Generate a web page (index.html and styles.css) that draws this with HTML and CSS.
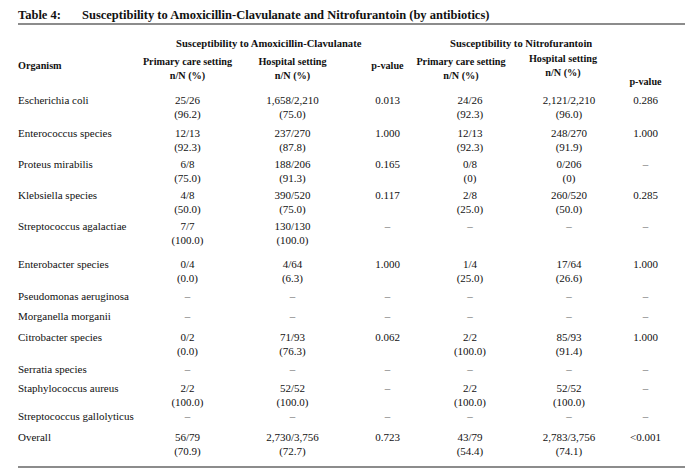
FILE: index.html
```html
<!DOCTYPE html>
<html>
<head>
<meta charset="utf-8">
<link rel="stylesheet" href="styles.css">
</head>
<body>
<div class="page">
  <h1 class="title"><span class="label">Table 4:</span><span>Susceptibility to Amoxicillin-Clavulanate and Nitrofurantoin (by antibiotics)</span></h1>
  <table class="data">
    <colgroup>
      <col class="c-org"><col class="c-pc"><col class="c-hs"><col class="c-pv"><col class="c-npc"><col class="c-nhs"><col class="c-npv"><col class="c-end">
    </colgroup>
    <thead>
      <tr class="group">
        <th></th>
        <th colspan="3" class="grp grp-a">Susceptibility to Amoxicillin-Clavulanate</th>
        <th colspan="3" class="grp grp-n">Susceptibility to Nitrofurantoin</th>
        <th></th>
      </tr>
      <tr class="cols">
        <th class="org h-org">Organism</th>
        <th class="h-two">Primary care setting<br>n/N (%)</th>
        <th class="h-two">Hospital setting<br>n/N (%)</th>
        <th class="h-pv">p-value</th>
        <th class="h-two"><div class="h-wide">Primary care setting<br>n/N (%)</div></th>
        <th class="h-two h-up">Hospital setting<br>n/N (%)</th>
        <th class="h-low">p-value</th>
        <th></th>
      </tr>
    </thead>
    <tbody>
      <tr class="r-esch"><td class="org">Escherichia coli</td><td>25/26<br>(96.2)</td><td>1,658/2,210<br>(75.0)</td><td>0.013</td><td>24/26<br>(92.3)</td><td>2,121/2,210<br>(96.0)</td><td>0.286</td><td></td></tr>
      <tr class="r2"><td class="org">Enterococcus species</td><td>12/13<br>(92.3)</td><td>237/270<br>(87.8)</td><td>1.000</td><td>12/13<br>(92.3)</td><td>248/270<br>(91.9)</td><td>1.000</td><td></td></tr>
      <tr class="r2"><td class="org">Proteus mirabilis</td><td>6/8<br>(75.0)</td><td>188/206<br>(91.3)</td><td>0.165</td><td>0/8<br>(0)</td><td>0/206<br>(0)</td><td class="dash">–</td><td></td></tr>
      <tr class="r2"><td class="org">Klebsiella species</td><td>4/8<br>(50.0)</td><td>390/520<br>(75.0)</td><td>0.117</td><td>2/8<br>(25.0)</td><td>260/520<br>(50.0)</td><td>0.285</td><td></td></tr>
      <tr class="r-gap"><td class="org">Streptococcus agalactiae</td><td>7/7<br>(100.0)</td><td>130/130<br>(100.0)</td><td class="dash">–</td><td class="dash">–</td><td class="dash">–</td><td class="dash">–</td><td></td></tr>
      <tr class="r2b"><td class="org">Enterobacter species</td><td>0/4<br>(0.0)</td><td>4/64<br>(6.3)</td><td>1.000</td><td>1/4<br>(25.0)</td><td>17/64<br>(26.6)</td><td>1.000</td><td></td></tr>
      <tr class="r1a"><td class="org">Pseudomonas aeruginosa</td><td class="dash">–</td><td class="dash">–</td><td class="dash">–</td><td class="dash">–</td><td class="dash">–</td><td class="dash">–</td><td></td></tr>
      <tr class="r1"><td class="org">Morganella morganii</td><td class="dash">–</td><td class="dash">–</td><td class="dash">–</td><td class="dash">–</td><td class="dash">–</td><td class="dash">–</td><td></td></tr>
      <tr class="r2b"><td class="org">Citrobacter species</td><td>0/2<br>(0.0)</td><td>71/93<br>(76.3)</td><td>0.062</td><td>2/2<br>(100.0)</td><td>85/93<br>(91.4)</td><td>1.000</td><td></td></tr>
      <tr class="r1b"><td class="org">Serratia species</td><td class="dash">–</td><td class="dash">–</td><td class="dash">–</td><td class="dash">–</td><td class="dash">–</td><td class="dash">–</td><td></td></tr>
      <tr class="r-staph"><td class="org">Staphylococcus aureus</td><td>2/2<br>(100.0)</td><td>52/52<br>(100.0)</td><td class="dash">–</td><td>2/2<br>(100.0)</td><td>52/52<br>(100.0)</td><td class="dash">–</td><td></td></tr>
      <tr class="r1"><td class="org">Streptococcus gallolyticus</td><td class="dash">–</td><td class="dash">–</td><td class="dash">–</td><td class="dash">–</td><td class="dash">–</td><td class="dash">–</td><td></td></tr>
      <tr class="r-last"><td class="org">Overall</td><td>56/79<br>(70.9)</td><td>2,730/3,756<br>(72.7)</td><td>0.723</td><td>43/79<br>(54.4)</td><td>2,783/3,756<br>(74.1)</td><td>&lt;0.001</td><td></td></tr>
    </tbody>
  </table>
</div>
</body>
</html>
```

FILE: styles.css
```css
html, body {
  margin: 0;
  padding: 0;
  background: #ffffff;
}

.page {
  width: 667px;
  padding-left: 18px;
  font-family: "Liberation Serif", "Times New Roman", serif;
  color: #111;
}

.title {
  margin: 0;
  padding-top: 8px;
  font-size: 12.5px;
  line-height: 15px;
  font-weight: bold;
  border-bottom: 2px solid #8c8c8c;
  display: flex;
}

.title .label {
  width: 64px;
  flex: none;
}

.data {
  width: 667px;
  border-collapse: collapse;
  table-layout: fixed;
  font-size: 11px;
  line-height: 14px;
  border-bottom: 2px solid #8c8c8c;
}

.c-org { width: 117px; }
.c-pc { width: 105px; }
.c-hs { width: 105px; }
.c-pv { width: 85px; }
.c-npc { width: 80px; }
.c-nhs { width: 118px; }
.c-npv { width: 35px; }
.c-end { width: 22px; }

.data th, .data td {
  padding: 0;
  text-align: center;
  vertical-align: top;
  white-space: nowrap;
}

.data th {
  font-weight: bold;
}

.data .org {
  text-align: left;
}

.group th {
  padding-top: 12px;
  height: 14px;
  font-size: 10.6px;
}

.data .grp {
  text-align: left;
}

.data .grp-a {
  padding-left: 41px;
}

.data .grp-n {
  padding-left: 20px;
}

.cols th {
  font-size: 10.2px;
  padding-top: 4px;
}

.cols .h-org,
.cols .h-pv {
  padding-top: 8px;
}

.h-wide {
  margin-left: -16px;
  margin-right: 2px;
  text-align: center;
}

.cols .h-up {
  padding-top: 1px;
  padding-right: 12px;
}

.cols .h-low {
  padding-top: 24px;
  padding-bottom: 4px;
}

.r-esch td { padding-bottom: 5px; }
.r2 td { padding-bottom: 3px; }
.r-gap td { padding-bottom: 10px; }
.r2b td { padding-bottom: 4px; }
.r1a td { padding-bottom: 6px; }
.r1 td { padding-bottom: 7px; }
.r1b td { padding-bottom: 5px; }
.r-staph td { padding-bottom: 0; }
.r-last td { padding-bottom: 8px; }

.dash {
  color: #666;
}
```
